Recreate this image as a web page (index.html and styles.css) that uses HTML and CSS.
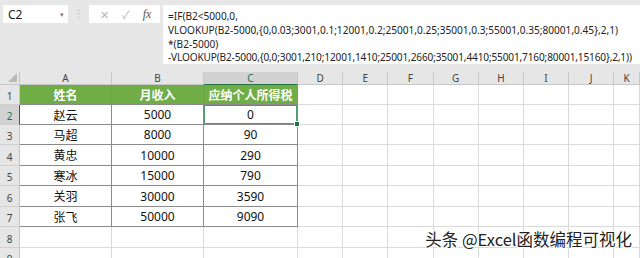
FILE: index.html
```html
<!DOCTYPE html>
<html lang="zh-CN">
<head>
    <meta charset="UTF-8">
    <title>Excel</title>
    <link rel="stylesheet" href="styles.css">
</head>
<body>

    <div class="topbar">
        <div class="namebox"><span>C2</span><span class="drop">▾</span></div>
        <div class="dots">⋮</div>
        <div class="fxbox">
            <span class="ico">✕</span>
            <span class="ico">✓</span>
            <span class="fx">fx</span>
        </div>
        <div class="formula">
            <p>=IF(B2&lt;5000,0,</p>
            <p>VLOOKUP(B2-5000,{0,0.03;3001,0.1;12001,0.2;25001,0.25;35001,0.3;55001,0.35;80001,0.45},2,1)</p>
            <p>*(B2-5000)</p>
            <p class="tight">-VLOOKUP(B2-5000,{0,0;3001,210;12001,1410;25001,2660;35001,4410;55001,7160;80001,15160},2,1))</p>
        </div>
    </div>

    <div class="sheet">
        <div class="corner"></div>
        <div class="colh">A</div>
        <div class="colh">B</div>
        <div class="colh sel">C</div>
        <div class="colh">D</div>
        <div class="colh">E</div>
        <div class="colh">F</div>
        <div class="colh">G</div>
        <div class="colh">H</div>
        <div class="colh">I</div>
        <div class="colh">J</div>
        <div class="colh">K</div>

        <div class="rowh">1</div>
        <div class="c head">姓名</div>
        <div class="c head">月收入</div>
        <div class="c head">应纳个人所得税</div>
        <div class="e"></div><div class="e"></div><div class="e"></div><div class="e"></div><div class="e"></div><div class="e"></div><div class="e"></div><div class="e"></div>

        <div class="rowh sel">2</div>
        <div class="c">赵云</div>
        <div class="c">5000</div>
        <div class="c active">0</div>
        <div class="e"></div><div class="e"></div><div class="e"></div><div class="e"></div><div class="e"></div><div class="e"></div><div class="e"></div><div class="e"></div>

        <div class="rowh">3</div>
        <div class="c">马超</div>
        <div class="c">8000</div>
        <div class="c">90</div>
        <div class="e"></div><div class="e"></div><div class="e"></div><div class="e"></div><div class="e"></div><div class="e"></div><div class="e"></div><div class="e"></div>

        <div class="rowh">4</div>
        <div class="c">黄忠</div>
        <div class="c">10000</div>
        <div class="c">290</div>
        <div class="e"></div><div class="e"></div><div class="e"></div><div class="e"></div><div class="e"></div><div class="e"></div><div class="e"></div><div class="e"></div>

        <div class="rowh">5</div>
        <div class="c">寒冰</div>
        <div class="c">15000</div>
        <div class="c">790</div>
        <div class="e"></div><div class="e"></div><div class="e"></div><div class="e"></div><div class="e"></div><div class="e"></div><div class="e"></div><div class="e"></div>

        <div class="rowh">6</div>
        <div class="c">关羽</div>
        <div class="c">30000</div>
        <div class="c">3590</div>
        <div class="e"></div><div class="e"></div><div class="e"></div><div class="e"></div><div class="e"></div><div class="e"></div><div class="e"></div><div class="e"></div>

        <div class="rowh">7</div>
        <div class="c">张飞</div>
        <div class="c">50000</div>
        <div class="c">9090</div>
        <div class="e"></div><div class="e"></div><div class="e"></div><div class="e"></div><div class="e"></div><div class="e"></div><div class="e"></div><div class="e"></div>

        <div class="rowh">8</div>
        <div class="e"></div><div class="e"></div><div class="e"></div>
        <div class="e"></div><div class="e"></div><div class="e"></div><div class="e"></div><div class="e"></div><div class="e"></div><div class="e"></div><div class="e"></div>

        <div class="rowh">9</div>
        <div class="e"></div><div class="e"></div><div class="e"></div>
        <div class="e"></div><div class="e"></div><div class="e"></div><div class="e"></div><div class="e"></div><div class="e"></div><div class="e"></div><div class="e"></div>

        <div class="mark">头条 @Excel函数编程可视化</div>
    </div>

</body>
</html>
```

FILE: styles.css
```css
body{
    margin: 0;
    padding: 0;
    width: 640px;
    height: 258px;
    overflow: hidden;
    background: white;
    font-family: "Noto Sans", "Noto Sans CJK SC", sans-serif;
    --green: #70ad47;
    --sel: #217346;
    --grid: #dadada;
    --line: #8a8a8a;
}

.topbar{
    height: 72px;
    background: #e7e7e7;
    display: flex;
    align-items: flex-start;
    padding: 5px 0 0 3px;
    box-sizing: border-box;
}

.namebox{
    width: 65px;
    height: 18px;
    background: white;
    display: flex;
    align-items: center;
    justify-content: space-between;
    padding: 0 4px 0 5px;
    box-sizing: border-box;
    font-size: 12px;
    color: #222;
}

.drop{
    font-size: 7px;
    color: #777;
}

.dots{
    width: 21px;
    text-align: center;
    color: #aaa;
    font-size: 11px;
    line-height: 18px;
}

.fxbox{
    width: 71px;
    height: 18px;
    background: white;
    display: flex;
    align-items: center;
    justify-content: space-around;
    padding: 0 2px 0 4px;
    box-sizing: border-box;
}

.ico{
    font-size: 11px;
    color: #b4b4b4;
}

.fx{
    font-family: "Liberation Serif", serif;
    font-style: italic;
    font-size: 12px;
    color: #555;
}

.formula{
    flex: 1;
    height: 59px;
    margin-left: 3px;
    background: white;
    padding: 5px 0 0 5px;
    box-sizing: border-box;
    font-size: 10.1px;
    color: #222;
    white-space: nowrap;
    overflow: hidden;
}

.formula p{
    margin: 0;
    line-height: 13.8px;
}

.formula .tight{
    letter-spacing: -0.15px;
}

.sheet{
    position: relative;
    display: grid;
    grid-template-columns: 20px 92px 92px 94px repeat(7, 45.2px) 1fr;
    grid-template-rows: 13px 20px 20px 20px 21px 20px 21px 20px 21px 20px;
    height: 186px;
    overflow: hidden;
}

.corner{
    background: #e6e6e6;
    border-right: 1px solid #c6c6c6;
    border-bottom: 1px solid #c6c6c6;
    position: relative;
}

.corner::after{
    content: "";
    position: absolute;
    right: 2px;
    bottom: 2px;
    border-left: 9px solid transparent;
    border-bottom: 9px solid #b9b9b9;
}

.colh{
    background: #e6e6e6;
    border-right: 1px solid #c8c8c8;
    border-bottom: 1px solid #c6c6c6;
    font-size: 10px;
    line-height: 12px;
    text-align: center;
    color: #444;
}

.colh.sel{
    background: #d2d2d2;
    border-bottom: 1px solid var(--sel);
    color: #217346;
}

.rowh{
    background: #e6e6e6;
    border-right: 1px solid #c6c6c6;
    border-bottom: 1px solid #d0d0d0;
    font-size: 10px;
    color: #444;
    display: flex;
    align-items: flex-end;
    justify-content: center;
    padding-bottom: 1px;
}

.rowh.sel{
    background: #d2d2d2;
    border-right: 1px solid var(--sel);
    color: #217346;
}

.e{
    border-right: 1px solid var(--grid);
    border-bottom: 1px solid var(--grid);
}

.c{
    border-right: 1px solid var(--line);
    border-bottom: 1px solid var(--line);
    font-size: 12px;
    color: #111;
    display: flex;
    align-items: center;
    justify-content: center;
}

.c.head{
    background: var(--green);
    color: white;
    font-weight: bold;
}

.active{
    position: relative;
    box-shadow: inset 0 0 0 1px #4f9a6b;
}

.active::after{
    content: "";
    position: absolute;
    right: -3px;
    bottom: -3px;
    width: 4px;
    height: 4px;
    background: var(--sel);
    border: 1px solid white;
}

.mark{
    position: absolute;
    right: 8px;
    bottom: 7px;
    font-family: "Noto Sans CJK SC", sans-serif;
    font-size: 16.5px;
    color: #222;
    text-shadow: 1px 1px 0 white, -1px -1px 0 white, 1px -1px 0 white, -1px 1px 0 white;
}
```
